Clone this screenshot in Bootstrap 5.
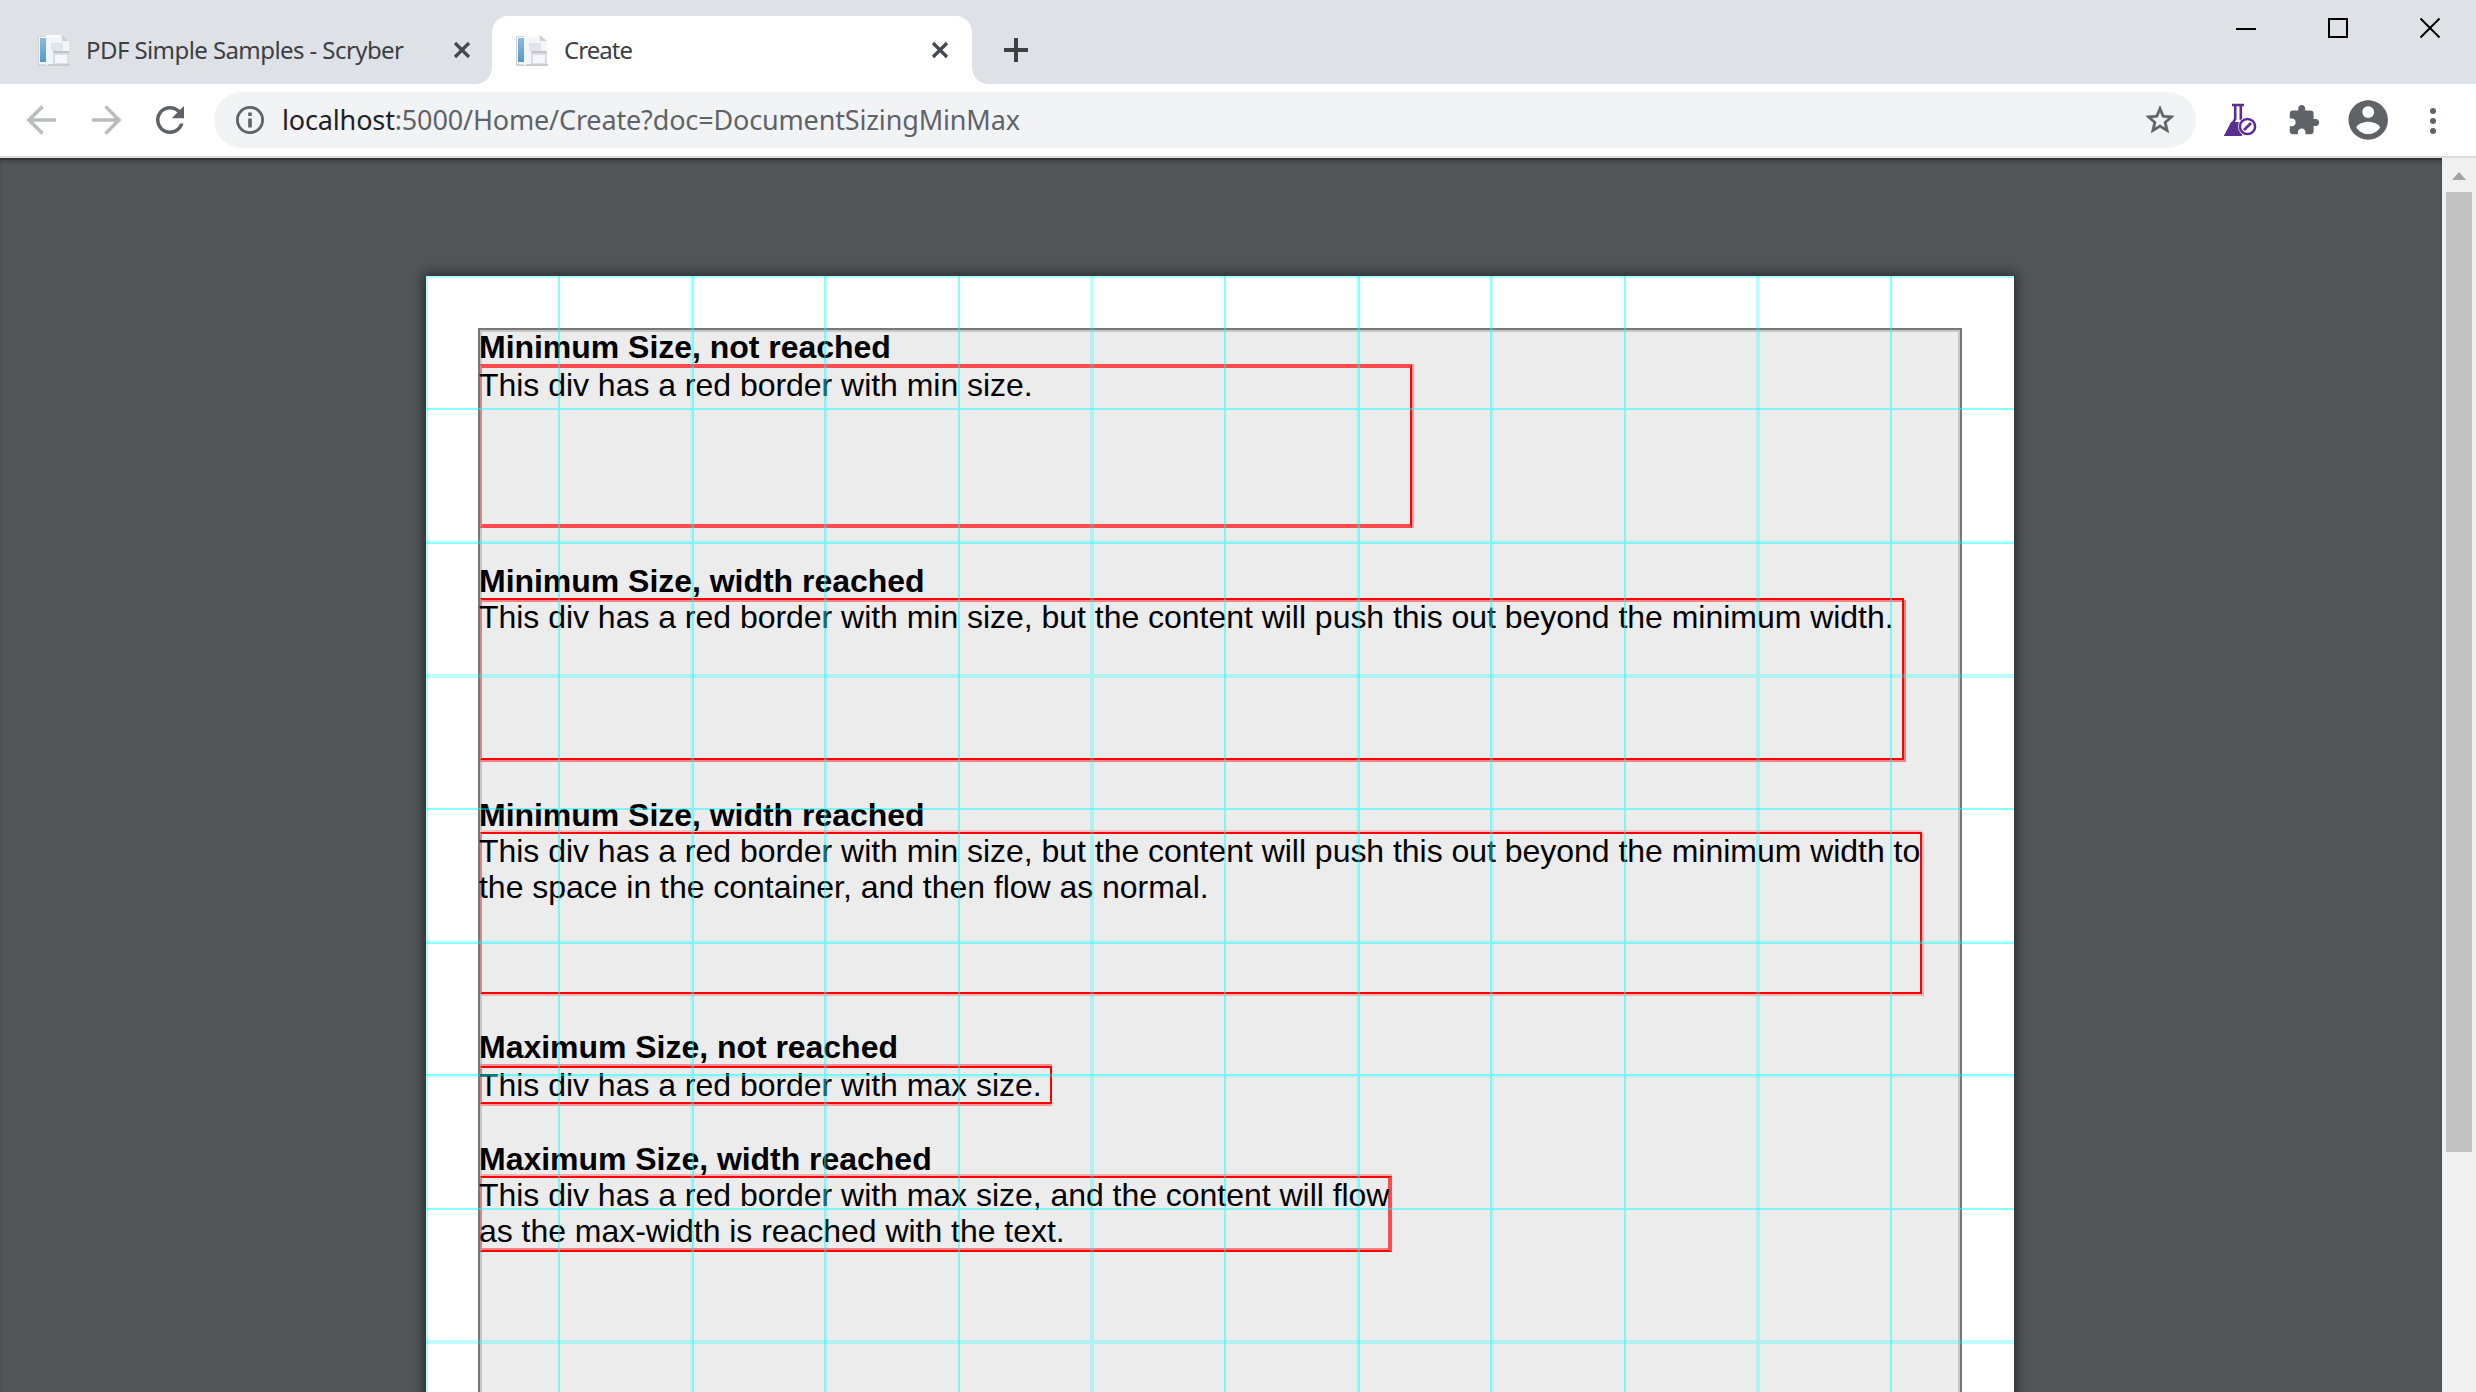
<!DOCTYPE html>
<html lang="en">
<head>
<meta charset="utf-8">
<title>Create</title>
<link href="https://cdn.jsdelivr.net/npm/bootstrap@5.3.0/dist/css/bootstrap.min.css" rel="stylesheet">
<style>
body{height:1392px;overflow:hidden;background:#525659;font-family:"Noto Sans","Open Sans",sans-serif}
svg{display:block;flex:none}
.strip{height:84px;background:#dee1e6;color:#3c4043;font-size:24px}
.tab-label{white-space:nowrap;line-height:36px;padding-bottom:1px}
.tab-idle{width:492px;height:68px;padding-left:38px;padding-right:21px}
.tab-active{width:480px;height:68px;background:#fff;border-radius:16px 16px 0 0;padding-left:24px;padding-right:23px;position:relative}
.tab-active::before,.tab-active::after{content:"";position:absolute;bottom:0;width:16px;height:16px}
.tab-active::before{left:-16px;background:radial-gradient(circle at 0 0,transparent 15.5px,#fff 16px)}
.tab-active::after{right:-16px;background:radial-gradient(circle at 100% 0,transparent 15.5px,#fff 16px)}
.t1{letter-spacing:-.58px}.t2{letter-spacing:-.95px}
.tools{height:74px;background:#fff;border-bottom:2px solid #dadce0;padding-left:26px;padding-right:40px}
.omni{height:56px;border-radius:28px;background:#f1f3f4;margin-left:28px;width:1982px;padding:0 19px 0 20px}
.url{font-size:27px;letter-spacing:-.15px;color:#5f6368;white-space:nowrap;line-height:40px}
.url b{font-weight:400;color:#202124}
.viewer{height:1234px}
.canvas-area{width:2442px;box-shadow:inset 0 2px 0 #33373a,inset 0 5px 4px -1px #3f4346;padding-top:118px;overflow:hidden}
.sheet{width:1588px;height:1240px;margin-left:426px;background:#fff;box-shadow:0 0 12px 2px rgba(0,0,0,.55);padding:52px 52px 0;position:relative}
.sheet-body{height:1300px;border:2px solid #777;box-shadow:inset 0 0 0 2px #c7c7c7;background:#ececec;font:32px/36px "Liberation Sans",Arial,sans-serif;color:#000}
.overlay-grid{position:absolute;left:0;top:0}
.head{font-weight:700;white-space:nowrap;margin-left:-1px;letter-spacing:-.03px}
.redbox{border:2px solid #f00;border-left-color:#d38888}
.redbox p{margin:-1px 0 0 -3px;white-space:nowrap;letter-spacing:-.03px}
.h1a{margin-top:-1px;margin-bottom:-1px}.h2a{margin-top:35px;margin-bottom:-1px}.h3a{margin-top:37px;margin-bottom:-1px}.h4a{margin-top:35px;margin-bottom:1px}.h5a{margin-top:37px;margin-bottom:-1px}
.b1{width:932px;height:164px;border-width:4px 2px 4px 2px;border-color:#ff4b4b #f00 #ff4b4b #d38888;box-shadow:2px 0 0 #f99}
.b2{width:1424px;height:162px;box-shadow:2px 2px 0 #f48484,0 2px 0 #f48484,inset 0 2px 0 #f48484}
.b3{width:1442px;height:162px;box-shadow:2px 2px 0 #f2b8b8,0 -2px 0 #f2c4c4}
.b4{width:572px;height:38px;box-shadow:0 2px 0 #f59a9a,0 -2px 0 #f59090}
.b5{width:912px;height:76px;border-right:4px solid #ff4b4b;box-shadow:0 -2px 0 #f5b0b0,inset 0 -2px 0 #f58080}
.bar{width:34px;background:#f0f0f0;padding-top:14px}
.thumb{width:26px;height:960px;background:#c1c1c1;margin-top:12px}
</style>
</head>
<body class="d-flex flex-column">
<svg width="0" height="0" class="position-absolute"><defs>
<linearGradient id="bl" x2="0" y2="1"><stop stop-color="#8bbbdf"/><stop offset="1" stop-color="#5099cf"/></linearGradient>
<symbol id="fav" viewBox="0 0 32 32"><path d="M0 2h10v28h22v2H0z" fill="#d5d6d9"/><path d="M1 3h9v27H1z" fill="#f5f5f5"/><path d="M2 4h6v24H2z" fill="url(#bl)"/><path d="M8 1h16l7 6v24H8z" fill="#f4f5f8"/><path d="M8 1h14v2H8z" fill="#fff"/><path d="M24 1v6h7z" fill="#d0d1d5"/><path d="M13 9h12v8H13z" fill="#e2e4ec"/><path d="M15 17h16v14H15z" fill="#dcdde2"/><path d="M15 17h16v2H15z" fill="#c3c4c8"/><path d="M17 21h12v8H17z" fill="#f5f7ff"/><path d="M10 30h22v2H10z" fill="#c9cacd"/></symbol>
<symbol id="cls" viewBox="0 0 18 18"><path d="M2 2l14 14M16 2L2 16" stroke="#45494d" stroke-width="3.2"/></symbol>
</defs></svg>
<header class="strip d-flex align-items-end">
  <div class="tab-idle d-flex align-items-center"><svg width="32" height="32"><use href="#fav"/></svg><span class="tab-label t1 ms-3">PDF Simple Samples - Scryber</span><svg class="ms-auto" width="18" height="18"><use href="#cls"/></svg></div>
  <div class="tab-active d-flex align-items-center"><svg width="32" height="32"><use href="#fav"/></svg><span class="tab-label t2 ms-3">Create</span><svg class="ms-auto" width="18" height="18"><use href="#cls"/></svg></div>
  <svg width="56" height="68" viewBox="972 16 56 68"><path d="M1004 50h24M1016 38v24" stroke="#3c4043" stroke-width="4"/></svg>
  <svg class="ms-auto" width="240" height="84" viewBox="2236 0 240 84" fill="none" stroke="#000" stroke-width="2"><path d="M2236 29h20M2329 19h18v18h-18zM2420.500 18.500l19 19M2439.500 18.500l-19 19"/></svg>
</header>
<nav class="tools d-flex align-items-center">
  <svg width="160" height="72" viewBox="26 84 160 72"><path d="M56 120H30M42.500 106.500L29 120l13.500 13.500M92 120h26M105.500 106.500L119 120l-13.500 13.500" fill="none" stroke="#babcbe" stroke-width="3.600"/><path transform="translate(149 99) scale(1.75)" fill="#5f6368" d="M17.650 6.350C16.200 4.900 14.210 4 12 4c-4.420 0-7.990 3.580-7.990 8s3.570 8 7.990 8c3.730 0 6.840-2.550 7.730-6h-2.080c-.82 2.330-3.040 4-5.650 4-3.310 0-6-2.690-6-6s2.690-6 6-6c1.660 0 3.140.69 4.220 1.780L13 11h7V4l-2.350 2.350z"/></svg>
  <div class="omni d-flex align-items-center">
    <svg width="32" height="32" viewBox="0 0 32 32"><circle cx="16" cy="16" r="12.600" fill="none" stroke="#5f6368" stroke-width="2.800"/><path d="M14.200 8.500h3.600V12h-3.600zM14.200 14.500h3.600v9h-3.600z" fill="#5f6368"/></svg>
    <span class="url ms-3"><b>localhost</b>:5000/Home/Create?doc=DocumentSizingMinMax</span>
    <svg class="ms-auto" width="34" height="34" viewBox="0 0 24 24"><path fill="#5f6368" stroke="#5f6368" stroke-width=".4" d="M22 9.240l-7.190-.62L12 2 9.190 8.630 2 9.240l5.460 4.730L5.820 21 12 17.270 18.180 21l-1.630-7.030L22 9.240zM12 15.400l-3.760 2.270 1-4.280-3.320-2.880 4.380-.38L12 6.100l1.710 4.040 4.380.38-3.320 2.880 1 4.280L12 15.400z"/></svg>
  </div>
  <svg width="240" height="72" viewBox="2196 84 240 72"><path d="M2232 105h12M2235.200 105v14l-9 15.500h16M2240.800 105v14l3 4" fill="none" stroke="#5c2d91" stroke-width="2.600"/><path d="M2231 122h8l4 3-2 11h-17z" fill="#5c2d91"/><circle cx="2247.500" cy="126.500" r="9.500" fill="#fff"/><circle cx="2247.500" cy="126.500" r="7.600" fill="#fff" stroke="#5c2d91" stroke-width="2.500"/><path d="M2244 130l7-7" stroke="#5c2d91" stroke-width="2.600"/>
  <path transform="translate(2287 103.500) scale(1.4)" fill="#5f6368" d="M20.500 11H19V7c0-1.100-.9-2-2-2h-4V3.500C13 2.120 11.880 1 10.500 1S8 2.120 8 3.500V5H4c-1.100 0-1.990.9-1.990 2v3.800H3.500c1.490 0 2.700 1.210 2.700 2.700s-1.210 2.700-2.700 2.700H2V20c0 1.100.9 2 2 2h3.800v-1.500c0-1.490 1.210-2.700 2.700-2.700 1.490 0 2.700 1.210 2.700 2.700V22H17c1.100 0 2-.9 2-2v-4h1.500c1.380 0 2.500-1.120 2.500-2.500S21.880 11 20.500 11z"/>
  <path transform="translate(2344.600 96.300) scale(1.97)" fill="#5f6368" d="M12 2C6.480 2 2 6.480 2 12s4.480 10 10 10 10-4.480 10-10S17.520 2 12 2zm0 3c1.660 0 3 1.340 3 3s-1.340 3-3 3-3-1.340-3-3 1.340-3 3-3zm0 14.200c-2.500 0-4.710-1.280-6-3.220.03-1.990 4-3.080 6-3.080 1.990 0 5.970 1.090 6 3.080-1.290 1.940-3.500 3.220-6 3.220z"/>
  <g fill="#5f6368"><circle cx="2433" cy="111" r="3"/><circle cx="2433" cy="121" r="3"/><circle cx="2433" cy="131" r="3"/></g></svg>
</nav>
<div class="viewer d-flex">
  <main class="canvas-area">
    <article class="sheet">
      <div class="sheet-body">
        <div class="head h1a"><span>Minimum Size, not reached</span></div>
        <div class="redbox b1"><p><span>This div has a red border with min size.</span></p></div>
        <div class="head h2a"><span>Minimum Size, width reached</span></div>
        <div class="redbox b2"><p><span>This div has a red border with min size, but the content will push this out beyond the minimum width.</span></p></div>
        <div class="head h3a"><span>Minimum Size, width reached</span></div>
        <div class="redbox b3"><p><span>This div has a red border with min size, but the content will push this out beyond the minimum width to</span><br><span>the space in the container, and then flow as normal.</span></p></div>
        <div class="head h4a"><span>Maximum Size, not reached</span></div>
        <div class="redbox b4"><p><span>This div has a red border with max size.</span></p></div>
        <div class="head h5a"><span>Maximum Size, width reached</span></div>
        <div class="redbox b5"><p><span>This div has a red border with max size, and the content will flow</span><br><span>as the max-width is reached with the text.</span></p></div>
      </div>
      <svg class="overlay-grid" width="1588" height="1116" viewBox="426 276 1588 1116" fill="#0ff" shape-rendering="crispEdges">
        <path fill-opacity=".3" d="M426 276h1588v2H426zM426 278h2v1114h-2z"/>
        <path fill-opacity=".46" d="M558 276h2v1116h-2zM692 276h2v1116h-2zM824 276h2v1116h-2zM958 276h2v1116h-2zM1224 276h2v1116h-2zM1358 276h2v1116h-2zM1490 276h2v1116h-2zM1624 276h2v1116h-2zM1890 276h2v1116h-2zM426 408h1588v2H426zM426 542h1588v2H426zM426 808h1588v2H426zM426 942h1588v2H426zM426 1074h1588v2H426zM426 1208h1588v2H426z"/>
        <path fill-opacity=".26" d="M1090 276h4v1116h-4zM1756 276h4v1116h-4zM426 674h1588v4H426zM426 1340h1588v4H426z"/>
        <path fill-opacity=".15" d="M690 276h2v1116h-2zM826 276h2v1116h-2zM1356 276h2v1116h-2zM1492 276h2v1116h-2zM426 540h1588v2H426zM426 940h1588v2H426zM426 1076h1588v2H426z"/>
      </svg>
    </article>
  </main>
  <aside class="bar d-flex flex-column align-items-center"><svg width="14" height="8"><path d="M7 0l7 8H0z" fill="#a3a3a3"/></svg><div class="thumb"></div></aside>
</div>
<script src="https://cdn.jsdelivr.net/npm/bootstrap@5.3.0/dist/js/bootstrap.bundle.min.js"></script>
</body>
</html>
